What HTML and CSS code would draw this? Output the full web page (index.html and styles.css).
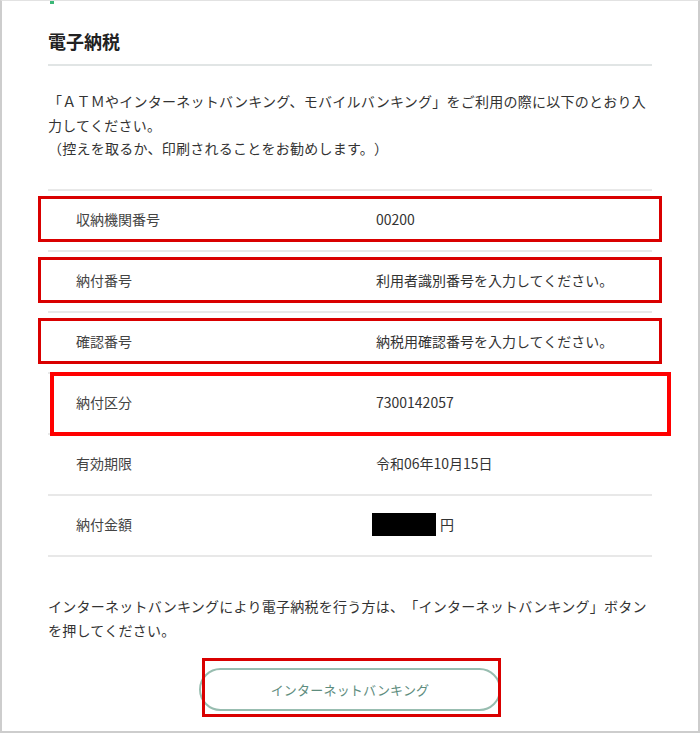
FILE: index.html
```html
<!DOCTYPE html>
<html lang="ja">
<head>
    <meta charset="UTF-8">
    <meta name="viewport" content="width=device-width, initial-scale=1.0">
    <title>電子納税</title>
    <link rel="stylesheet" href="styles.css">
</head>
<body>
    <div class="frame">
        <div class="tab-edge"></div>

        <h2 class="section-title">電子納税</h2>

        <p class="lead">
            「ＡＴＭやインターネットバンキング、モバイルバンキング」をご利用の際に以下のとおり入力してください。<br>
            （控えを取るか、印刷されることをお勧めします。）
        </p>

        <div class="rows">
            <div class="row">
                <span class="label">収納機関番号</span>
                <span class="value">00200</span>
                <span class="mark"></span>
            </div>
            <div class="row">
                <span class="label">納付番号</span>
                <span class="value">利用者識別番号を入力してください。</span>
                <span class="mark"></span>
            </div>
            <div class="row">
                <span class="label">確認番号</span>
                <span class="value">納税用確認番号を入力してください。</span>
                <span class="mark"></span>
            </div>
            <div class="row">
                <span class="label">納付区分</span>
                <span class="value">7300142057</span>
                <span class="mark mark-wide"></span>
            </div>
            <div class="row">
                <span class="label">有効期限</span>
                <span class="value">令和06年10月15日</span>
            </div>
            <div class="row">
                <span class="label">納付金額</span>
                <span class="value amount"><span class="masked"></span>円</span>
            </div>
        </div>

        <p class="note">インターネットバンキングにより電子納税を行う方は、「インターネットバンキング」ボタンを押してください。</p>

        <div class="btn-wrap">
            <button class="btn-bank" type="button">インターネットバンキング</button>
            <span class="mark mark-btn"></span>
        </div>
    </div>
</body>
</html>
```

FILE: styles.css
```css
body {
    margin: 0;
    font-family: "Noto Sans CJK JP", "Noto Sans", sans-serif;
    color: #333;
    background-color: #fff;
    text-spacing-trim: space-all;
}
.frame {
    width: 700px;
    height: 733px;
    box-sizing: border-box;
    border: 2px solid #cdcdcd;
    border-top: 1px solid #e2e2e2;
    padding: 0 46px;
    overflow: hidden;
}
.tab-edge {
    width: 4px;
    height: 3px;
    margin-left: 2px;
    background-color: #3cb878;
}
.section-title {
    margin: 25px 0 0;
    padding-bottom: 11px;
    font-size: 18px;
    line-height: 24px;
    font-weight: bold;
    color: #222;
    border-bottom: 2px solid #e1e5e5;
}
.lead, .note {
    font-size: 14px;
    line-height: 24px;
    letter-spacing: 0.25px;
    color: #333;
}
.lead {
    margin: 24px 0 28px;
    line-height: 23.5px;
}
.rows {
    border-bottom: 2px solid #e8e8e8;
}
.row {
    position: relative;
    display: grid;
    grid-template-columns: 328px 1fr;
    align-items: center;
    height: 61px;
    box-sizing: border-box;
    padding-bottom: 3px;
    border-top: 2px solid #e8e8e8;
    font-size: 14px;
}
.label {
    padding-left: 28px;
    color: #444;
}
.value {
    color: #333;
}
.amount {
    display: flex;
    align-items: center;
    gap: 4px;
}
.masked {
    display: inline-block;
    width: 64px;
    height: 23px;
    margin-left: -4px;
    margin-top: 2px;
    background-color: #000;
}

/* red frames drawn over the rows and the button */
.mark {
    position: absolute;
    z-index: 1;
    top: 5px;
    bottom: 8px;
    left: -10px;
    right: -10px;
    border: 3px solid #d90000;
    pointer-events: none;
}
.mark-wide {
    top: -2px;
    bottom: -3px;
    left: 2px;
    right: -19px;
    border: 4px solid #ff0000;
}
.note {
    margin: 37px 0 0;
}
.btn-wrap {
    position: relative;
    width: 302px;
    margin: 26px auto 0;
}
.btn-bank {
    display: block;
    width: 302px;
    height: 43px;
    border: 2px solid #98bdb0;
    border-radius: 22px;
    background-color: #fff;
    font-family: inherit;
    font-size: 13px;
    letter-spacing: 0.2px;
    color: #5e8d7e;
    cursor: pointer;
}
.mark-btn {
    top: -10px;
    bottom: -6px;
    left: 3px;
    right: 0;
}
```
